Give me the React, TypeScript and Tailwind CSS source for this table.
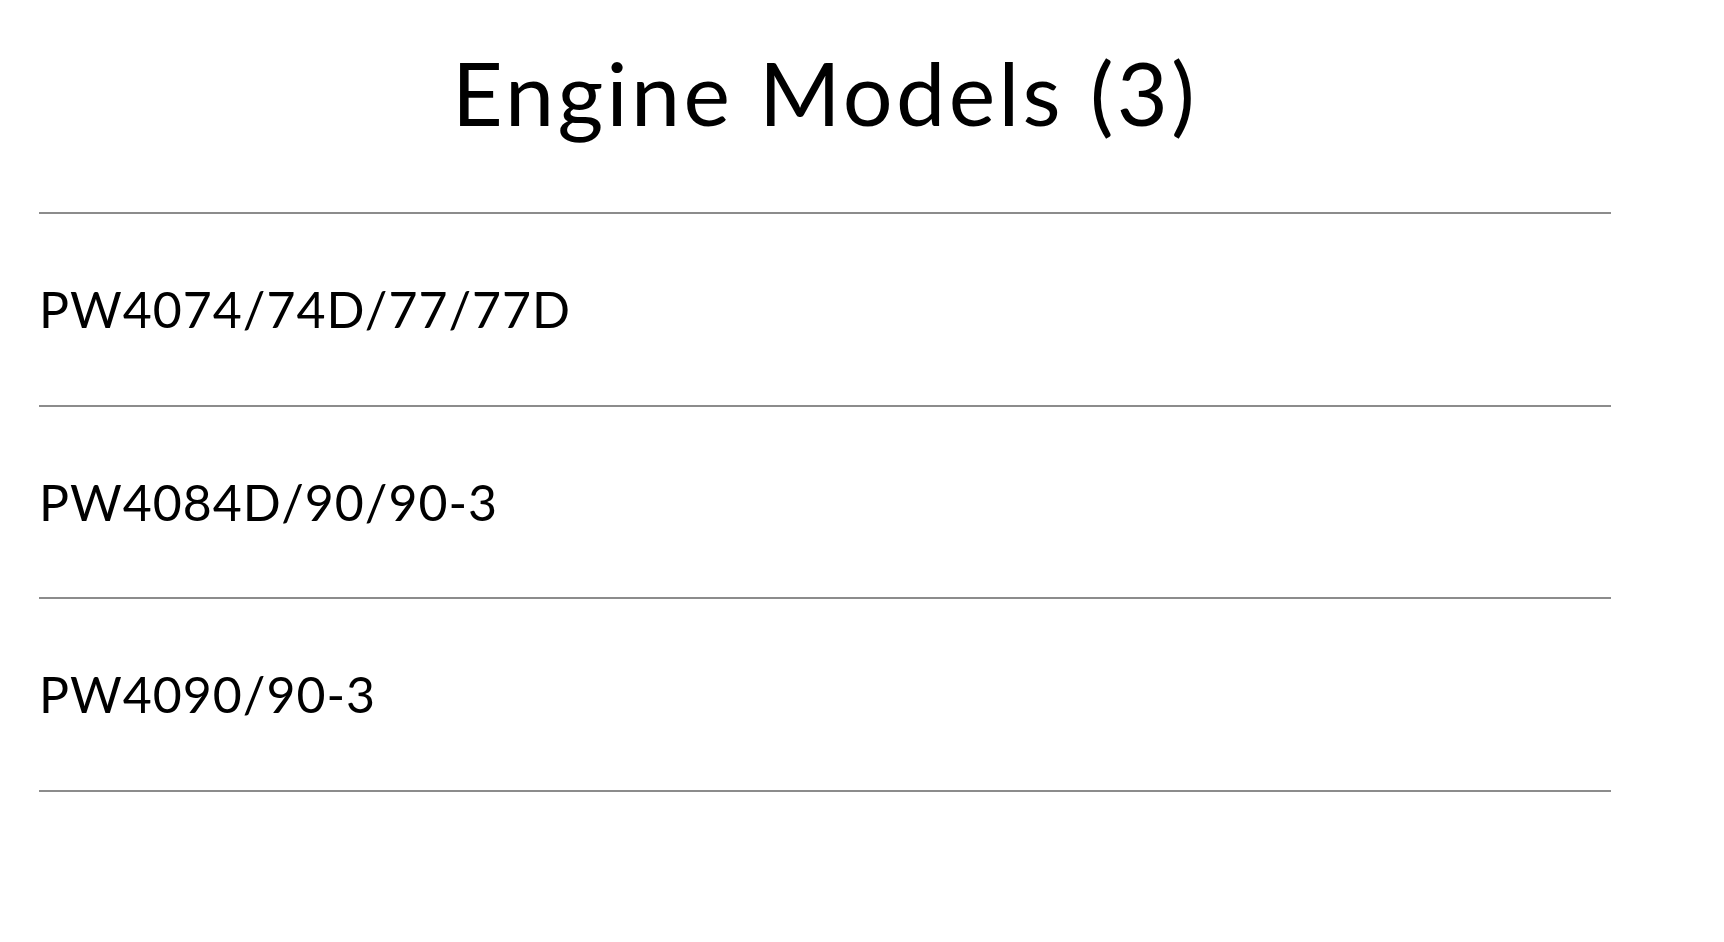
const modelos = ["PW4074/74D/77/77D", "PW4084D/90/90-3", "PW4090/90-3"];

export default function App() {
  return (
    <div className="min-h-screen bg-white text-black font-['Lato',sans-serif]">
      <div className="ml-[39px] w-[1572px]">
        {/* TITULO */}
        <header className="h-[212px] pt-[48px]">
          <h1 className="text-center text-[88px] leading-none font-normal tracking-[0.038em]">
            Engine Models ({modelos.length})
          </h1>
        </header>

        {/* LISTA DE MODELOS */}
        <ul className="border-b-2 border-[#8c8c8c]">
          {modelos.map((modelo) => (
            <li
              key={modelo}
              className="h-[192.5px] border-t-2 border-[#8c8c8c] flex items-center"
            >
              <span className="text-[50px] leading-none tracking-[0.02em]">{modelo}</span>
            </li>
          ))}
        </ul>
      </div>
    </div>
  );
}
